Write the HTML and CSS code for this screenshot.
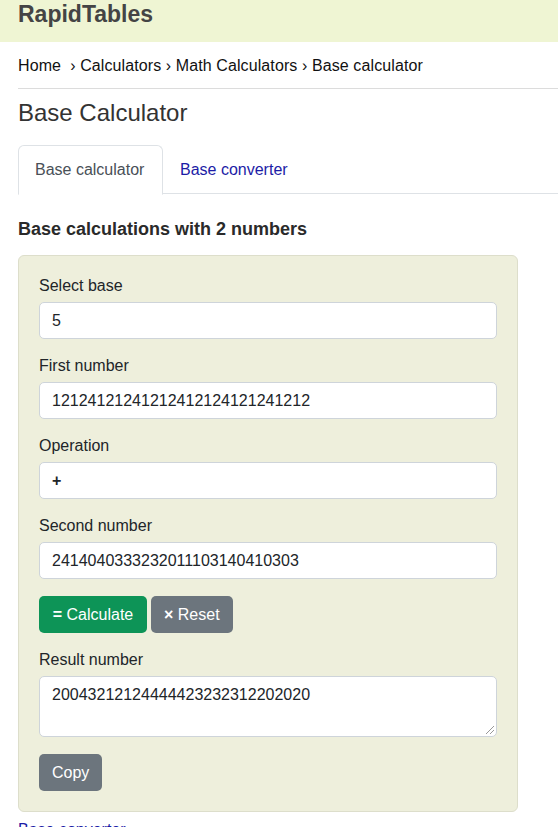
FILE: index.html
```html
<!DOCTYPE html>
<html lang="en">
<head>
<meta charset="utf-8">
<title>Base Calculator</title>
<link rel="stylesheet" href="styles.css">
</head>
<body>
<header class="header">
  <div class="logo">RapidTables</div>
</header>
<main class="page">
  <nav class="crumbs">Home &nbsp;› Calculators › Math Calculators › Base calculator</nav>
  <h1 class="title">Base Calculator</h1>
  <div class="tabs">
    <div class="tab active">Base calculator</div>
    <a class="tab link" href="#">Base converter</a>
  </div>
  <h2 class="subtitle">Base calculations with 2 numbers</h2>
  <form class="panel">
    <label class="lbl">Select base</label>
    <div class="field">5</div>
    <label class="lbl">First number</label>
    <div class="field">12124121241212412124121241212</div>
    <label class="lbl">Operation</label>
    <div class="field op">+</div>
    <label class="lbl">Second number</label>
    <div class="field">2414040333232011103140410303</div>
    <div class="btns">
      <button type="button" class="btn green"><b>=</b> Calculate</button>
      <button type="button" class="btn gray"><b>×</b> Reset</button>
    </div>
    <label class="lbl">Result number</label>
    <div class="field area">20043212124444423232312202020<span class="grip"></span></div>
    <div class="btns last">
      <button type="button" class="btn gray">Copy</button>
    </div>
  </form>
  <a class="more" href="#">Base converter ›</a>
</main>
</body>
</html>
```
FILE: styles.css
```css
* { box-sizing: border-box; }
body {
  margin: 0;
  font-family: "Liberation Sans", Arial, sans-serif;
  color: #212529;
  background: #fff;
  font-size: 16px;
}
.header {
  height: 42px;
  background: #eff5d3;
  padding: 1px 0 0 18px;
}
.logo {
  font-size: 23px;
  font-weight: bold;
  color: #444;
  line-height: 26px;
}
.page {
  padding-left: 18px;
}
.crumbs {
  margin-top: 12px;
  line-height: 24px;
  padding-bottom: 10px;
  border-bottom: 1px solid #dcdcdc;
  color: #111;
  letter-spacing: 0.1px;
}
.title {
  margin: 9px 0 0;
  font-size: 24px;
  font-weight: normal;
  line-height: 30px;
  color: #333;
}
.tabs {
  margin-top: 17px;
  display: flex;
  border-bottom: 1px solid #dee2e6;
  height: 49px;
}
.tab {
  display: block;
  padding: 1px 16px 0;
  line-height: 48px;
  text-decoration: none;
}
.tab.active {
  width: 145px;
  border: 1px solid #dee2e6;
  border-bottom: 1px solid #fff;
  border-radius: 6px 6px 0 0;
  color: #495057;
  background: #fff;
  height: 50px;
  padding-top: 0;
}
.tab.link {
  color: #1c1ca6;
  padding-left: 17px;
}
.subtitle {
  margin: 23px 0 0;
  font-size: 18px;
  font-weight: bold;
  line-height: 24px;
  color: #2a2a2a;
}
.panel {
  margin-top: 14px;
  width: 500px;
  background: #eeefdc;
  border: 1px solid #dddecb;
  border-radius: 6px;
  padding: 17px 20px 20px;
  display: flex;
  flex-direction: column;
}
.lbl {
  line-height: 24px;
  padding-top: 1px;
  margin-bottom: 4px;
  color: #212529;
}
.field {
  width: 458px;
  height: 37px;
  background: #fff;
  border: 1px solid #ced4da;
  border-radius: 5px;
  padding: 0 12px;
  line-height: 35px;
  margin-bottom: 14px;
  color: #212529;
}
.field.op { font-weight: bold; }
.field.area {
  height: 61px;
  line-height: 24px;
  padding-top: 6px;
  position: relative;
}
.grip {
  position: absolute;
  right: 2px;
  bottom: 2px;
  width: 8px;
  height: 8px;
  background: linear-gradient(135deg, transparent 45%, #999 46%, #999 52%, transparent 53%, transparent 70%, #999 71%, #999 77%, transparent 78%);
}
.btns {
  display: flex;
  gap: 4px;
  margin: 3px 0 14px;
}
.btns.last { margin: 3px 0 0; }
.btn {
  height: 37px;
  border: none;
  border-radius: 5px;
  color: #fff;
  font-family: inherit;
  font-size: 16px;
  padding: 0 13px;
  cursor: pointer;
}
.btn b { font-weight: bold; }
.green { background: #0d9457; width: 108px; padding: 0 12px; }
.gray { background: #6c757d; }
.more {
  display: block;
  margin-top: 6px;
  color: #1c1ca6;
  text-decoration: none;
  line-height: 24px;
}
```
